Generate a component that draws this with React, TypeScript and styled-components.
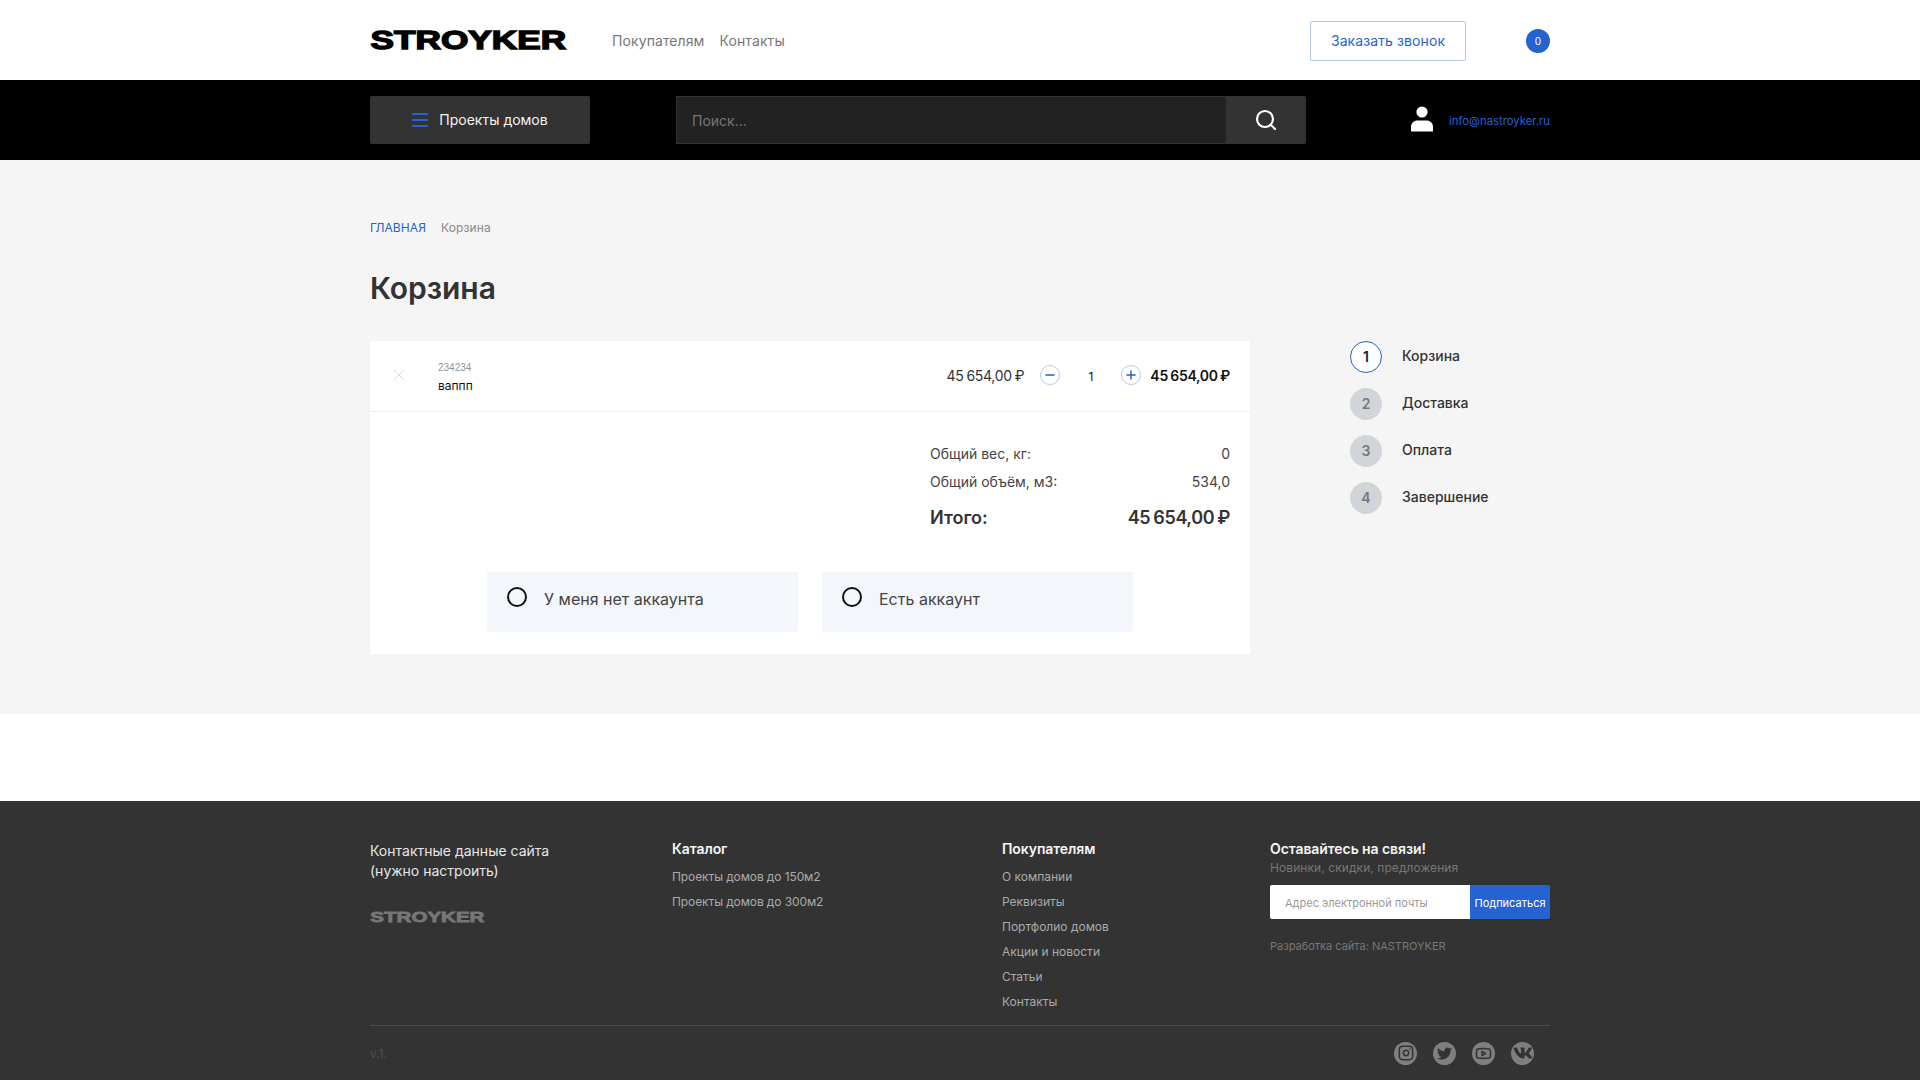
import React from 'react';
import styled, { createGlobalStyle } from 'styled-components';
import { Instagram, Minus, Plus, Search, X, Youtube } from 'lucide-react';
import { FaTwitter, FaVk } from 'react-icons/fa';

const GlobalStyle = createGlobalStyle`
  html, body {
    margin: 0;
    padding: 0;
    background: #ffffff;
  }
  body {
    font-family: Inter, "Noto Sans", sans-serif;
    color: #333333;
  }
  * {
    box-sizing: border-box;
  }
`;

const BLUE = '#2563d0';

const Container = styled.div`
  margin: 0 auto;
  width: 1180px;
`;

const TopRow = styled(Container)`
  align-items: center;
  display: flex;
  height: 80px;
`;

const LogoSvg = styled.svg<{ $width: number; $height: number }>`
  display: block;
  flex: none;
  height: ${(props) => props.$height}px;
  overflow: visible;
  width: ${(props) => props.$width}px;
`;

const Nav = styled.nav`
  display: flex;
  gap: 15px;
  margin-left: 45px;
`;

const NavLink = styled.a`
  color: #777777;
  font-size: 14px;
  letter-spacing: 0.1px;
`;

const CallButton = styled.button`
  background: #ffffff;
  border: 1px solid #b4c8e6;
  border-radius: 2px;
  color: ${BLUE};
  font-family: inherit;
  font-size: 14px;
  height: 40px;
  letter-spacing: 0.1px;
  margin-left: auto;
  margin-top: 2px;
  padding: 0 0 2px;
  width: 156px;
`;

const CartBadge = styled.div`
  align-items: center;
  background: ${BLUE};
  border-radius: 50%;
  color: #ffffff;
  display: flex;
  font-size: 10px;
  height: 24px;
  justify-content: center;
  margin-left: 60px;
  margin-top: 2px;
  width: 24px;
`;

const BlackBar = styled.div`
  background: #000000;
`;

const BarRow = styled(Container)`
  align-items: center;
  display: flex;
  height: 80px;
`;

const ProjectsButton = styled.button`
  align-items: center;
  background: #333333;
  border: 0;
  border-radius: 2px;
  color: #f2f2f2;
  display: flex;
  font-family: inherit;
  font-size: 14px;
  gap: 11px;
  height: 48px;
  justify-content: center;
  padding: 0;
  width: 220px;
`;

const ProjectsLabel = styled.span`
  margin-top: -2px;
`;

const Burger = styled.span`
  border-bottom: 2px solid ${BLUE};
  border-top: 2px solid ${BLUE};
  display: block;
  height: 14px;
  position: relative;
  width: 16px;
  &::after {
    background: ${BLUE};
    content: '';
    height: 2px;
    left: 0;
    position: absolute;
    right: 0;
    top: 4px;
  }
`;

const SearchBox = styled.div`
  display: flex;
  height: 48px;
  margin-left: 86px;
  width: 630px;
`;

const SearchField = styled.div`
  align-items: center;
  background: #222222;
  border: 1px solid #333333;
  border-right: 0;
  color: #777777;
  display: flex;
  flex: 1;
  font-size: 14px;
  padding-left: 15px;
`;

const SearchButton = styled.div`
  align-items: center;
  background: #333333;
  border-radius: 0 2px 2px 0;
  color: #ffffff;
  display: flex;
  justify-content: center;
  width: 80px;
`;

const UserBlock = styled.div`
  align-items: center;
  display: flex;
  gap: 16px;
  margin-left: auto;
`;

const UserSvg = styled.svg`
  display: block;
  margin-top: -3px;
`;

const UserEmail = styled.a`
  color: ${BLUE};
  font-size: 11.3px;
  margin-top: 1px;
`;

const Main = styled.main`
  background: #f5f5f5;
  height: 554px;
  padding-top: 60px;
`;

const Breadcrumbs = styled.div`
  display: flex;
  font-size: 12px;
  gap: 15px;
  letter-spacing: 0.1px;
  line-height: 16px;
`;

const Crumb = styled.span<{ $active?: boolean }>`
  color: ${(props) => (props.$active ? BLUE : '#888888')};
`;

const Title = styled.h1`
  color: #333333;
  font-size: 30px;
  font-weight: 600;
  letter-spacing: -0.05px;
  line-height: 40px;
  margin: 32px 0 33px;
`;

const Columns = styled.div`
  align-items: flex-start;
  display: flex;
  gap: 100px;
`;

const Card = styled.section`
  background: #ffffff;
  height: 313px;
  width: 880px;
`;

const ItemRow = styled.div`
  align-items: center;
  border-bottom: 1px solid #f1f1f1;
  display: flex;
  height: 71px;
  padding: 0 20px 2px 19px;
`;

const RemoveIcon = styled(X)`
  color: #d2d5d8;
  flex: none;
`;

const ItemInfo = styled.div`
  display: flex;
  flex-direction: column;
  gap: 4px;
  margin-left: 29px;
  padding-top: 5px;
`;

const ItemCode = styled.span`
  color: #8a949e;
  font-family: 'Liberation Sans', sans-serif;
  font-size: 10px;
  line-height: 12px;
`;

const ItemName = styled.span`
  color: #111111;
  font-size: 12px;
  line-height: 16px;
`;

const ItemPrice = styled.span`
  color: #333333;
  font-size: 14px;
  letter-spacing: -0.3px;
  margin-left: auto;
  word-spacing: -0.6px;
`;

const CircleButton = styled.span`
  align-items: center;
  background: #ffffff;
  border: 1px solid #b4c8e6;
  border-radius: 50%;
  color: ${BLUE};
  display: flex;
  flex: none;
  height: 20px;
  justify-content: center;
  width: 20px;
`;

const Quantity = styled.div`
  align-items: center;
  display: flex;
  margin-left: 16px;
`;

const QuantityValue = styled.span`
  color: #111111;
  font-size: 12px;
  padding-top: 2px;
  text-align: center;
  width: 61px;
`;

const ItemTotal = styled.span`
  color: #111111;
  font-size: 14px;
  font-weight: 600;
  letter-spacing: -0.3px;
  margin-left: 9px;
  word-spacing: -0.8px;
`;

const Summary = styled.div`
  display: flex;
  flex-direction: column;
  margin: 32px 20px 0 auto;
  width: 300px;
`;

const SummaryRow = styled.div`
  color: #444444;
  display: flex;
  font-size: 14px;
  justify-content: space-between;
  line-height: 20px;
  margin-bottom: 8px;
`;

const SummaryTotal = styled(SummaryRow)`
  color: #333333;
  font-size: 18px;
  font-weight: 600;
  line-height: 24px;
  margin: 6px 0 0;
`;

const SummaryAmount = styled.span`
  letter-spacing: -0.4px;
  word-spacing: -1px;
`;

const Options = styled.div`
  display: flex;
  gap: 24px;
  margin: 42px 0 0 117px;
`;

const Option = styled.label`
  background: #f3f6fb;
  border-radius: 2px;
  color: #444444;
  display: flex;
  font-size: 16px;
  gap: 17px;
  height: 60px;
  padding: 15px 20px;
  width: 311px;
`;

const Radio = styled.span`
  border: 2px solid #111111;
  border-radius: 50%;
  display: block;
  flex: none;
  height: 20px;
  width: 20px;
`;

const OptionText = styled.span`
  line-height: 20px;
  margin-top: 2px;
`;

const Steps = styled.ol`
  display: flex;
  flex-direction: column;
  gap: 15px;
  list-style: none;
  margin: 0;
  padding: 0;
`;

const Step = styled.li`
  align-items: center;
  color: #333333;
  display: flex;
  font-size: 14px;
  font-weight: 500;
  gap: 20px;
`;

const StepLabel = styled.span`
  margin-top: -3px;
`;

const StepNumber = styled.span<{ $active?: boolean }>`
  align-items: center;
  background: ${(props) => (props.$active ? '#ffffff' : '#d1d5da')};
  border: ${(props) => (props.$active ? `1px solid ${BLUE}` : 'none')};
  border-radius: 50%;
  color: ${(props) => (props.$active ? '#222222' : '#777777')};
  display: flex;
  font-weight: 600;
  height: 32px;
  justify-content: center;
  padding-bottom: 2px;
  width: 32px;
`;

const Spacer = styled.div`
  background: #ffffff;
  height: 87px;
`;

const Footer = styled.footer`
  background: #333333;
  height: 279px;
`;

const FooterGrid = styled.div`
  border-bottom: 1px solid #4a4a4a;
  display: grid;
  grid-template-columns: 302px 330px 268px 280px;
  height: 225px;
  padding-top: 40px;
`;

const FooterContacts = styled.div`
  color: #e6e6e6;
  font-size: 14px;
  line-height: 20px;
`;

const ContactsText = styled.p`
  margin: 0 0 30px;
`;

const FooterColumn = styled.div`
  display: flex;
  flex-direction: column;
`;

const FooterTitle = styled.div`
  color: #f5f5f5;
  font-size: 14px;
  font-weight: 600;
  letter-spacing: -0.08px;
  line-height: 16px;
  margin-bottom: 12px;
`;

const FooterLink = styled.a`
  color: #aaaaaa;
  font-size: 12px;
  line-height: 15px;
  margin-bottom: 10px;
`;

const CatalogLink = styled(FooterLink)`
  letter-spacing: -0.1px;
`;

const FooterNote = styled.div`
  color: #777777;
  font-size: 12px;
  letter-spacing: 0.08px;
  line-height: 15px;
  margin-top: -9px;
`;

const Subscribe = styled.div`
  display: flex;
  height: 34px;
  margin-top: 10px;
`;

const SubscribeInput = styled.div`
  align-items: center;
  background: #ffffff;
  border-radius: 2px 0 0 2px;
  color: #999999;
  display: flex;
  font-size: 11px;
  padding: 2px 0 0 15px;
  width: 200px;
`;

const SubscribeButton = styled.div`
  align-items: center;
  background: ${BLUE};
  border-radius: 0 2px 2px 0;
  color: #ffffff;
  display: flex;
  font-size: 11px;
  justify-content: center;
  padding-top: 2px;
  width: 80px;
`;

const Credit = styled.div`
  color: #777777;
  font-size: 11px;
  line-height: 14px;
  margin-top: 20px;
`;

const FooterBottom = styled.div`
  align-items: center;
  display: flex;
  height: 54px;
  justify-content: space-between;
  padding-right: 16px;
`;

const Version = styled.span`
  color: #4f4f4f;
  font-size: 12px;
`;

const Socials = styled.div`
  display: flex;
  gap: 16px;
`;

const SocialIcon = styled.a`
  align-items: center;
  background: #7f7f7f;
  border-radius: 50%;
  color: #333333;
  display: flex;
  height: 23px;
  justify-content: center;
  width: 23px;
`;

const Logo = ({ width, height, color }: { width: number; height: number; color: string }) => (
  <LogoSvg $width={width} $height={height} viewBox="0 0 197 20">
    <text
      x="0.6"
      y="19.4"
      fill={color}
      stroke={color}
      strokeWidth="1.4"
      fontFamily="'Liberation Sans', sans-serif"
      fontWeight="700"
      fontSize="26.5"
      textLength="195.5"
      lengthAdjust="spacingAndGlyphs"
    >
      STROYKER
    </text>
  </LogoSvg>
);

const UserIcon = () => (
  <UserSvg width="22" height="26" viewBox="0 0 22 26" fill="#ffffff">
    <circle cx="11" cy="6" r="5.6" />
    <path d="M0 25.5V21c0-4.2 3-6.6 6.5-6.6h9C19 14.4 22 16.8 22 21v4.5z" />
  </UserSvg>
);

const catalogLinks = ['Проекты домов до 150м2', 'Проекты домов до 300м2'];
const buyerLinks = ['О компании', 'Реквизиты', 'Портфолио домов', 'Акции и новости', 'Статьи', 'Контакты'];
const steps = ['Корзина', 'Доставка', 'Оплата', 'Завершение'];

export default function App() {
  return (
    <>
      <GlobalStyle />
      <TopRow as="header">
        <Logo width={197} height={20} color="#000000" />
        <Nav>
          <NavLink>Покупателям</NavLink>
          <NavLink>Контакты</NavLink>
        </Nav>
        <CallButton>Заказать звонок</CallButton>
        <CartBadge>0</CartBadge>
      </TopRow>

      <BlackBar>
        <BarRow>
          <ProjectsButton>
            <Burger />
            <ProjectsLabel>Проекты домов</ProjectsLabel>
          </ProjectsButton>
          <SearchBox>
            <SearchField>Поиск...</SearchField>
            <SearchButton>
              <Search size={24} strokeWidth={2.2} />
            </SearchButton>
          </SearchBox>
          <UserBlock>
            <UserIcon />
            <UserEmail>info@nastroyker.ru</UserEmail>
          </UserBlock>
        </BarRow>
      </BlackBar>

      <Main>
        <Container>
          <Breadcrumbs>
            <Crumb $active>ГЛАВНАЯ</Crumb>
            <Crumb>Корзина</Crumb>
          </Breadcrumbs>
          <Title>Корзина</Title>
          <Columns>
            <Card>
              <ItemRow>
                <RemoveIcon size={20} strokeWidth={1} />
                <ItemInfo>
                  <ItemCode>234234</ItemCode>
                  <ItemName>ваппп</ItemName>
                </ItemInfo>
                <ItemPrice>45 654,00 ₽</ItemPrice>
                <Quantity>
                  <CircleButton>
                    <Minus size={14} strokeWidth={2.5} />
                  </CircleButton>
                  <QuantityValue>1</QuantityValue>
                  <CircleButton>
                    <Plus size={14} strokeWidth={2.5} />
                  </CircleButton>
                </Quantity>
                <ItemTotal>45 654,00 ₽</ItemTotal>
              </ItemRow>
              <Summary>
                <SummaryRow>
                  <span>Общий вес, кг:</span>
                  <span>0</span>
                </SummaryRow>
                <SummaryRow>
                  <span>Общий объём, м3:</span>
                  <span>534,0</span>
                </SummaryRow>
                <SummaryTotal>
                  <span>Итого:</span>
                  <SummaryAmount>45 654,00 ₽</SummaryAmount>
                </SummaryTotal>
              </Summary>
              <Options>
                <Option>
                  <Radio />
                  <OptionText>У меня нет аккаунта</OptionText>
                </Option>
                <Option>
                  <Radio />
                  <OptionText>Есть аккаунт</OptionText>
                </Option>
              </Options>
            </Card>
            <Steps>
              {steps.map((step, index) => (
                <Step key={step}>
                  <StepNumber $active={index === 0}>{index + 1}</StepNumber>
                  <StepLabel>{step}</StepLabel>
                </Step>
              ))}
            </Steps>
          </Columns>
        </Container>
      </Main>

      <Spacer />

      <Footer>
        <Container>
          <FooterGrid>
            <FooterContacts>
              <ContactsText>
                Контактные данные сайта
                <br />
                (нужно настроить)
              </ContactsText>
              <Logo width={115} height={12} color="#777777" />
            </FooterContacts>
            <FooterColumn>
              <FooterTitle>Каталог</FooterTitle>
              {catalogLinks.map((link) => (
                <CatalogLink key={link}>{link}</CatalogLink>
              ))}
            </FooterColumn>
            <FooterColumn>
              <FooterTitle>Покупателям</FooterTitle>
              {buyerLinks.map((link) => (
                <FooterLink key={link}>{link}</FooterLink>
              ))}
            </FooterColumn>
            <FooterColumn>
              <FooterTitle>Оставайтесь на связи!</FooterTitle>
              <FooterNote>Новинки, скидки, предложения</FooterNote>
              <Subscribe>
                <SubscribeInput>Адрес электронной почты</SubscribeInput>
                <SubscribeButton>Подписаться</SubscribeButton>
              </Subscribe>
              <Credit>Разработка сайта: NASTROYKER</Credit>
            </FooterColumn>
          </FooterGrid>
          <FooterBottom>
            <Version>v.1.</Version>
            <Socials>
              <SocialIcon>
                <Instagram size={16} strokeWidth={2.2} />
              </SocialIcon>
              <SocialIcon>
                <FaTwitter size={15} />
              </SocialIcon>
              <SocialIcon>
                <Youtube size={17} strokeWidth={2.2} />
              </SocialIcon>
              <SocialIcon>
                <FaVk size={20} />
              </SocialIcon>
            </Socials>
          </FooterBottom>
        </Container>
      </Footer>
    </>
  );
}
